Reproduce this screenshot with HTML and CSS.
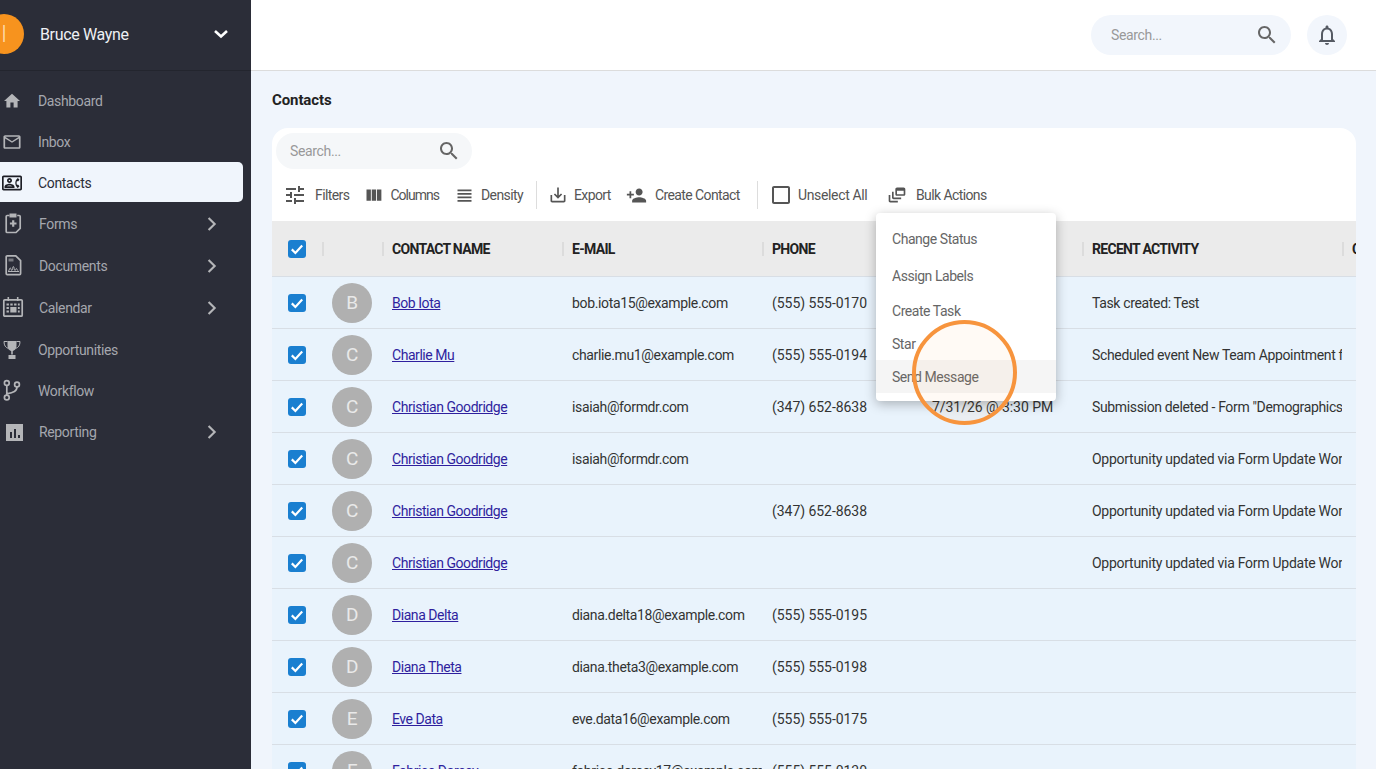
FILE: index.html
```html
<!DOCTYPE html>
<html lang="en">
<head>
    <meta charset="UTF-8">
    <meta name="viewport" content="width=device-width, initial-scale=1.0">
    <title>Contacts</title>
    <link rel="stylesheet" href="styles.css">
</head>
<body>
    <svg class="sprites" width="0" height="0">
        <symbol id="i-search" viewBox="0 0 24 24"><path d="M15.5 14h-.79l-.28-.27C15.41 12.59 16 11.11 16 9.5 16 5.91 13.09 3 9.5 3S3 5.91 3 9.5 5.91 16 9.5 16c1.61 0 3.09-.59 4.23-1.57l.27.28v.79l5 4.99L20.49 19l-4.99-5zm-6 0C7.01 14 5 11.99 5 9.5S7.01 5 9.5 5 14 7.01 14 9.5 11.99 14 9.5 14z"/></symbol>
        <symbol id="i-chevron" viewBox="0 0 24 24"><path d="M8.2 5.600 10 3.800 18.200 12 10 20.200l-1.800-1.800L14.600 12z"/></symbol>
        <symbol id="i-check" viewBox="0 0 18 18"><path d="M3.8 9.4 7.4 13l6.8-7.4" fill="none" stroke="#fff" stroke-width="2.2"/></symbol>
    </svg>

    <div class="app">
        <!-- Sidebar -->
        <aside class="sidebar">
            <div class="profile">
                <div class="profile-avatar">I</div>
                <span class="profile-name">Bruce Wayne</span>
                <svg class="profile-caret" viewBox="0 0 16 10"><path d="M2 2l6 5.5L14 2" fill="none" stroke="#fff" stroke-width="2.6"/></svg>
            </div>
            <nav class="nav">
                <a class="nav-item">
                    <svg class="nav-icon" viewBox="-3 -3 30 30"><path d="M10 20v-6h4v6h5v-8h3L12 3 2 12h3v8z"/></svg>
                    <span>Dashboard</span>
                </a>
                <a class="nav-item">
                    <svg class="nav-icon" viewBox="-2 -2 28 28"><path d="M20 4H4c-1.1 0-1.99.9-1.99 2L2 18c0 1.1.9 2 2 2h16c1.1 0 2-.9 2-2V6c0-1.1-.9-2-2-2zm0 14H4V8l8 5 8-5v10zm-8-7L4 6h16l-8 5z"/></svg>
                    <span>Inbox</span>
                </a>
                <a class="nav-item active">
                    <svg class="nav-icon" viewBox="-2.4 -2.4 28.8 28.8"><path d="M22 3H2C.9 3 0 3.9 0 5v14c0 1.1.9 2 2 2h20c1.1 0 1.99-.9 1.99-2L24 5c0-1.1-.9-2-2-2zm0 16H2V5h20v14zm-2.99-1l1.99-2-1.51-2h-1.64c-.22-.63-.35-1.3-.35-2s.13-1.37.35-2h1.64L21 8l-1.99-2c-1.31.98-2.28 2.37-2.73 4-.18.64-.28 1.31-.28 2s.1 1.36.28 2c.45 1.62 1.42 3.02 2.73 4zM9 12c1.65 0 3-1.35 3-3s-1.35-3-3-3-3 1.35-3 3 1.35 3 3 3zm0-4c.55 0 1 .45 1 1s-.45 1-1 1-1-.45-1-1 .45-1 1-1zm6 8.59c0-2.5-3.97-3.58-6-3.58s-6 1.08-6 3.58V18h12v-1.41zM5.48 16c.74-.5 2.22-1 3.52-1s2.77.49 3.52 1H5.48z"/></svg>
                    <span>Contacts</span>
                </a>
                <a class="nav-item expand">
                    <svg class="nav-icon" viewBox="0 0 24 24"><path class="line" d="M8.5 3.5H6.2a1 1 0 0 0-1 1v15a1 1 0 0 0 1 1H15l4.2-4.2V4.5a1 1 0 0 0-1-1h-2"/><path d="M8.5 1.5h7v4h-7z"/><path class="line thick" d="M12.2 8.2v6.6M8.9 11.5h6.6"/></svg>
                    <span>Forms</span>
                    <svg class="nav-chevron"><use href="#i-chevron"/></svg>
                </a>
                <a class="nav-item expand">
                    <svg class="nav-icon" viewBox="0 0 24 24"><path class="line" d="M6.2 1.8h8.6l4.8 4.8v13a1 1 0 0 1-1 1H6.2a1 1 0 0 1-1-1v-16.800a1 1 0 0 1 1-1z"/><path class="faint" d="M7.500 4.500h5v3h-5z"/><path class="line hair" d="M7 17.500h11M7.500 17c1-1 1-3 1.800-3s.7 2.500 1.500 2.500.8-4 1.600-4 .7 4 1.500 4 .8-2 1.500-2 .7 2 2 2.500"/></svg>
                    <span>Documents</span>
                    <svg class="nav-chevron"><use href="#i-chevron"/></svg>
                </a>
                <a class="nav-item expand">
                    <svg class="nav-icon" viewBox="0 0 24 24"><path class="line" d="M3.800 3.800h16.400a1 1 0 0 1 1 1v14.400a1 1 0 0 1-1 1H3.800a1 1 0 0 1-1-1V4.800a1 1 0 0 1 1-1z"/><path d="M6.500 1h1.600v4H6.500zM15.900 1h1.600v4h-1.600zM5.500 7.500h2.400v2H5.500zM9.300 7.500h2.400v2H9.300zM13.100 7.500h2.400v2h-2.400zM16.900 7.500h1.800v2h-1.800zM5.500 11h2.400v2H5.500zM5.500 14.500h2.400v2H5.500zM9.300 11h6.200v5.500H9.300zM16.900 11h1.800v2h-1.800zM16.900 14.500h1.800v2h-1.800z"/></svg>
                    <span>Calendar</span>
                    <svg class="nav-chevron"><use href="#i-chevron"/></svg>
                </a>
                <a class="nav-item">
                    <svg class="nav-icon" viewBox="0 0 24 24"><path d="M7.500 3h9v4.500c0 3-1.800 5.500-4.500 5.500s-4.500-2.500-4.500-5.500zM11.200 13h1.600v3.500h-1.600zM8.500 17h7v4h-7z"/><path class="line hair" d="M7.500 3.500H4c0 4 1.500 6 4.500 7M16.500 3.500H20c0 4-1.500 6-4.500 7"/></svg>
                    <span>Opportunities</span>
                </a>
                <a class="nav-item">
                    <svg class="nav-icon" viewBox="0 0 24 24"><circle class="line" cx="6.800" cy="4" r="2.400"/><circle class="line" cx="6.800" cy="18.500" r="2.400"/><circle class="line" cx="17" cy="5.500" r="2.400"/><path class="line" d="M6.800 6.500v9.800M17 8c0 4.200-3.500 5.500-10.200 6.800"/></svg>
                    <span>Workflow</span>
                </a>
                <a class="nav-item expand">
                    <svg class="nav-icon" viewBox="0 0 24 24"><path fill-rule="evenodd" d="M5 4h17v17H5zM9 12v6h2v-6zM13 9v9h2V9zM17 15v3h2v-3z"/></svg>
                    <span>Reporting</span>
                    <svg class="nav-chevron"><use href="#i-chevron"/></svg>
                </a>
            </nav>
        </aside>

        <div class="main">
            <!-- Top bar -->
            <header class="topbar">
                <div class="search search-top">
                    <span>Search...</span>
                    <svg class="search-icon"><use href="#i-search"/></svg>
                </div>
                <div class="bell">
                    <svg viewBox="0 0 24 24"><path d="M12 22c1.100 0 2-.9 2-2h-4c0 1.100.9 2 2 2zm6-6v-5c0-3.070-1.630-5.640-4.500-6.320V4c0-.83-.67-1.500-1.500-1.500s-1.500.67-1.500 1.500v.68C7.640 5.360 6 7.920 6 11v5l-2 2v1h16v-1l-2-2zm-2 1H8v-6c0-2.480 1.510-4.500 4-4.500s4 2.020 4 4.500v6z"/></svg>
                </div>
            </header>

            <section class="content">
                <h1>Contacts</h1>

                <div class="card">
                    <div class="search search-table">
                        <span>Search...</span>
                        <svg class="search-icon"><use href="#i-search"/></svg>
                    </div>

                    <!-- Toolbar -->
                    <div class="toolbar">
                        <button class="tool tool-filters">
                            <svg class="icon-24" viewBox="0 0 24 24"><path d="M3 17v2h6v-2H3zM3 5v2h10V5H3zm10 16v-2h8v-2h-8v-2h-2v6h2zM7 9v2H3v2h4v2h2V9H7zm14 4v-2H11v2h10zm-6-4h2V7h4V5h-4V3h-2v6z"/></svg>
                            Filters
                        </button>
                        <button class="tool tool-columns">
                            <svg class="icon-21" viewBox="0 0 24 24"><path d="M10 18h5V5h-5v13zm-6 0h5V5H4v13zM16 5v13h5V5h-5z"/></svg>
                            Columns
                        </button>
                        <button class="tool tool-density">
                            <svg class="icon-21" viewBox="0 0 24 24"><path d="M4 15h16v-2H4v2zm0 4h16v-2H4v2zm0-8h16V9H4v2zm0-6v2h16V5H4z"/></svg>
                            Density
                        </button>
                        <i class="tool-sep"></i>
                        <button class="tool tool-export">
                            <svg class="icon-20" viewBox="0 0 24 24"><path d="M19 12v7H5v-7H3v7c0 1.100.9 2 2 2h14c1.100 0 2-.9 2-2v-7h-2zm-6 .67l2.590-2.580L17 11.500l-5 5-5-5 1.410-1.410L11 12.670V3h2z"/></svg>
                            Export
                        </button>
                        <button class="tool tool-create">
                            <svg class="icon-21" viewBox="0 0 24 24"><path d="M15 12c2.210 0 4-1.790 4-4s-1.790-4-4-4-4 1.790-4 4 1.790 4 4 4zm-9-2V7H4v3H1v2h3v3h2v-3h3v-2H6zm9 4c-2.670 0-8 1.340-8 4v2h16v-2c0-2.660-5.330-4-8-4z"/></svg>
                            Create Contact
                        </button>
                        <i class="tool-sep"></i>
                        <button class="tool tool-unselect">
                            <svg class="icon-24" viewBox="0 0 24 24"><path d="M19 5v14H5V5h14m0-2H5c-1.100 0-2 .9-2 2v14c0 1.100.9 2 2 2h14c1.100 0 2-.9 2-2V5c0-1.100-.9-2-2-2z"/></svg>
                            Unselect All
                        </button>
                        <button class="tool tool-bulk">
                            <svg class="icon-20" viewBox="0 0 24 24"><path d="M8 8H6v7c0 1.100.9 2 2 2h9v-2H8V8z"/><path d="M20 3h-8c-1.100 0-2 .9-2 2v6c0 1.100.9 2 2 2h8c1.100 0 2-.9 2-2V5c0-1.100-.9-2-2-2zm0 8h-8V7h8v4z"/><path d="M4 12H2v7c0 1.100.9 2 2 2h9v-2H4v-7z"/></svg>
                            Bulk Actions
                        </button>
                    </div>

                    <!-- Bulk actions menu -->
                    <ul class="menu">
                        <li>Change Status</li>
                        <li>Assign Labels</li>
                        <li>Create Task</li>
                        <li>Star</li>
                        <li class="hover">Send Message</li>
                    </ul>

                    <!-- Contacts table -->
                    <div class="table">
                        <div class="row head">
                            <div class="cell cell-check"><span class="checkbox"><svg><use href="#i-check"/></svg></span></div>
                            <div class="cell"></div>
                            <div class="cell">CONTACT NAME</div>
                            <div class="cell">E-MAIL</div>
                            <div class="cell">PHONE</div>
                            <div class="cell"></div>
                            <div class="cell">RECENT ACTIVITY</div>
                            <div class="cell">CREATED</div>
                        </div>

                        <div class="row">
                            <div class="cell cell-check"><span class="checkbox"><svg><use href="#i-check"/></svg></span></div>
                            <div class="cell"><span class="avatar">B</span></div>
                            <div class="cell"><a>Bob Iota</a></div>
                            <div class="cell">bob.iota15@example.com</div>
                            <div class="cell cell-num">(555) 555-0170</div>
                            <div class="cell"></div>
                            <div class="cell">Task created: Test</div>
                            <div class="cell"></div>
                        </div>
                        <div class="row">
                            <div class="cell cell-check"><span class="checkbox"><svg><use href="#i-check"/></svg></span></div>
                            <div class="cell"><span class="avatar">C</span></div>
                            <div class="cell"><a>Charlie Mu</a></div>
                            <div class="cell">charlie.mu1@example.com</div>
                            <div class="cell cell-num">(555) 555-0194</div>
                            <div class="cell"></div>
                            <div class="cell">Scheduled event New Team Appointment for</div>
                            <div class="cell"></div>
                        </div>
                        <div class="row">
                            <div class="cell cell-check"><span class="checkbox"><svg><use href="#i-check"/></svg></span></div>
                            <div class="cell"><span class="avatar">C</span></div>
                            <div class="cell"><a>Christian Goodridge</a></div>
                            <div class="cell">isaiah@formdr.com</div>
                            <div class="cell cell-num">(347) 652-8638</div>
                            <div class="cell cell-num">7/31/26 @ 3:30 PM</div>
                            <div class="cell">Submission deleted - Form "Demographics"</div>
                            <div class="cell"></div>
                        </div>
                        <div class="row">
                            <div class="cell cell-check"><span class="checkbox"><svg><use href="#i-check"/></svg></span></div>
                            <div class="cell"><span class="avatar">C</span></div>
                            <div class="cell"><a>Christian Goodridge</a></div>
                            <div class="cell">isaiah@formdr.com</div>
                            <div class="cell"></div>
                            <div class="cell"></div>
                            <div class="cell cell-long">Opportunity updated via Form Update Workflow</div>
                            <div class="cell"></div>
                        </div>
                        <div class="row">
                            <div class="cell cell-check"><span class="checkbox"><svg><use href="#i-check"/></svg></span></div>
                            <div class="cell"><span class="avatar">C</span></div>
                            <div class="cell"><a>Christian Goodridge</a></div>
                            <div class="cell"></div>
                            <div class="cell cell-num">(347) 652-8638</div>
                            <div class="cell"></div>
                            <div class="cell cell-long">Opportunity updated via Form Update Workflow</div>
                            <div class="cell"></div>
                        </div>
                        <div class="row">
                            <div class="cell cell-check"><span class="checkbox"><svg><use href="#i-check"/></svg></span></div>
                            <div class="cell"><span class="avatar">C</span></div>
                            <div class="cell"><a>Christian Goodridge</a></div>
                            <div class="cell"></div>
                            <div class="cell"></div>
                            <div class="cell"></div>
                            <div class="cell cell-long">Opportunity updated via Form Update Workflow</div>
                            <div class="cell"></div>
                        </div>
                        <div class="row">
                            <div class="cell cell-check"><span class="checkbox"><svg><use href="#i-check"/></svg></span></div>
                            <div class="cell"><span class="avatar">D</span></div>
                            <div class="cell"><a>Diana Delta</a></div>
                            <div class="cell">diana.delta18@example.com</div>
                            <div class="cell cell-num">(555) 555-0195</div>
                            <div class="cell"></div>
                            <div class="cell"></div>
                            <div class="cell"></div>
                        </div>
                        <div class="row">
                            <div class="cell cell-check"><span class="checkbox"><svg><use href="#i-check"/></svg></span></div>
                            <div class="cell"><span class="avatar">D</span></div>
                            <div class="cell"><a>Diana Theta</a></div>
                            <div class="cell">diana.theta3@example.com</div>
                            <div class="cell cell-num">(555) 555-0198</div>
                            <div class="cell"></div>
                            <div class="cell"></div>
                            <div class="cell"></div>
                        </div>
                        <div class="row">
                            <div class="cell cell-check"><span class="checkbox"><svg><use href="#i-check"/></svg></span></div>
                            <div class="cell"><span class="avatar">E</span></div>
                            <div class="cell"><a>Eve Data</a></div>
                            <div class="cell">eve.data16@example.com</div>
                            <div class="cell cell-num">(555) 555-0175</div>
                            <div class="cell"></div>
                            <div class="cell"></div>
                            <div class="cell"></div>
                        </div>
                        <div class="row">
                            <div class="cell cell-check"><span class="checkbox"><svg><use href="#i-check"/></svg></span></div>
                            <div class="cell"><span class="avatar">F</span></div>
                            <div class="cell"><a>Fabrice Dorsey</a></div>
                            <div class="cell">fabrice.dorsey17@example.com</div>
                            <div class="cell cell-num">(555) 555-0130</div>
                            <div class="cell"></div>
                            <div class="cell"></div>
                            <div class="cell"></div>
                        </div>
                    </div>
                </div>
            </section>
        </div>

        <!-- Tutorial highlight -->
        <div class="highlight"></div>
    </div>
</body>
</html>
```

FILE: styles.css
```css
* {
    margin: 0;
    padding: 0;
    box-sizing: border-box;
}

html, body {
    height: 100%;
    overflow: hidden;
    font-family: Roboto, Arial, sans-serif;
    font-size: 14px;
    letter-spacing: -0.35px;
    background-color: #f0f5fc;
    color: #333;
}

.sprites {
    position: absolute;
}

.app {
    position: relative;
    display: flex;
    height: 100vh;
    overflow: hidden;
}

/* Sidebar */
.sidebar {
    flex: 0 0 267px;
    margin-left: -16px;
    background-color: #2b2d38;
}

.profile {
    display: flex;
    align-items: center;
    height: 71px;
    padding: 0 22px 2px 0;
    border-bottom: 1px solid #23252e;
}

.profile-avatar {
    display: flex;
    align-items: center;
    justify-content: center;
    flex: 0 0 40px;
    height: 40px;
    border-radius: 50%;
    background-color: #f7931e;
    color: #ffdcb0;
    font-size: 23px;
    font-weight: 300;
}

.profile-name {
    flex: 1;
    margin-left: 16px;
    color: #eef0f4;
    font-size: 16px;
}

.profile-caret {
    width: 16px;
    height: 10px;
}

.nav {
    padding-top: 9px;
}

.nav-item {
    display: flex;
    align-items: center;
    height: 41px;
    padding-left: 16px;
    margin-right: 8px;
    border-radius: 0 5px 5px 0;
    color: #a5a7ae;
}

.nav-item.expand {
    height: 42px;
    padding-left: 17px;
}

.nav-item span {
    flex: 1;
    margin-left: 14px;
}

.nav-item.active {
    height: 40px;
    margin-bottom: 1px;
    padding-top: 1px;
    background-color: #f0f5fc;
    color: #2b2d38;
}

.nav-icon {
    flex: 0 0 24px;
    width: 24px;
    height: 24px;
    fill: #b4b5b8;
}

.active .nav-icon {
    fill: #1c1d24;
}

.nav-icon .line {
    fill: none;
    stroke: #b4b5b8;
    stroke-width: 1.7;
}

.nav-icon .thick {
    stroke-width: 2.2;
}

.nav-icon .hair {
    stroke-width: 1;
}

.nav-icon .faint {
    fill: #77787f;
}

.nav-chevron {
    width: 20px;
    height: 20px;
    margin-right: 22px;
    fill: #b4b5b8;
}

/* Top bar */
.main {
    flex: 1;
    min-width: 0;
}

.topbar {
    display: flex;
    align-items: center;
    justify-content: flex-end;
    gap: 16px;
    height: 71px;
    padding-right: 29px;
    background-color: #fff;
    border-bottom: 1px solid #dcdcdc;
}

.search {
    display: flex;
    align-items: center;
    justify-content: space-between;
    color: #999;
}

.search-icon {
    width: 24px;
    height: 24px;
    fill: #666;
}

.search-top {
    width: 200px;
    height: 40px;
    padding: 0 12px 0 20px;
    border-radius: 20px;
    background-color: #f2f6fc;
}

.search-table {
    width: 196px;
    height: 36px;
    margin: 5px 0 0 4px;
    padding: 0 11px 0 14px;
    border-radius: 18px;
    background-color: #f5f7f9;
}

.bell {
    display: flex;
    align-items: center;
    justify-content: center;
    width: 40px;
    height: 40px;
    border-radius: 50%;
    background-color: #f2f6fc;
}

.bell svg {
    width: 24px;
    height: 24px;
    fill: #555a63;
}

/* Content */
.content {
    padding: 19px 20px 0 21px;
}

h1 {
    height: 20px;
    margin-bottom: 18px;
    font-size: 15px;
    line-height: 20px;
    font-weight: bold;
    letter-spacing: -0.1px;
    color: #222;
}

.card {
    position: relative;
    height: 700px;
    border-radius: 16px 16px 0 0;
    background-color: #fff;
    overflow: hidden;
}

/* Toolbar */
.toolbar {
    display: flex;
    align-items: center;
    height: 28px;
    margin: 12px 0;
    padding-left: 11px;
}

.tool {
    display: flex;
    align-items: center;
    border: none;
    background: none;
    font: inherit;
    letter-spacing: -0.6px;
    color: #555;
    white-space: nowrap;
}

.tool svg {
    flex: none;
    fill: #555;
}

.icon-24 {
    width: 24px;
    height: 24px;
}

.icon-21 {
    width: 21px;
    height: 21px;
}

.icon-20 {
    width: 20px;
    height: 20px;
}

.tool-filters { width: 79.5px; gap: 8px; }
.tool-columns { width: 91px; gap: 7px; letter-spacing: -1px; }
.tool-density { width: 82.5px; gap: 6.5px; }
.tool-export { width: 78.5px; gap: 6.5px; margin-left: 10.5px; }
.tool-create { width: 131px; gap: 8px; }
.tool-unselect { width: 118px; gap: 5px; margin-left: 11px; letter-spacing: -0.35px; }
.tool-bulk { gap: 9px; }

.tool-sep {
    flex: none;
    width: 1px;
    height: 28px;
    background-color: #ddd;
}

/* Bulk actions menu */
.menu {
    position: absolute;
    left: 604px;
    top: 85px;
    z-index: 2;
    width: 180px;
    padding: 9px 0 8px;
    list-style: none;
    border-radius: 4px;
    background-color: #fff;
    box-shadow: 0 3px 12px rgba(0, 0, 0, 0.28);
    color: #666;
    letter-spacing: -0.45px;
}

.menu li {
    display: flex;
    align-items: center;
    height: 33px;
    padding-left: 16px;
}

.menu li:nth-child(2) {
    margin: 4px 0 2px;
}

.menu li.hover {
    background-color: #f5f5f5;
}

/* Table */
.row {
    display: grid;
    grid-template-columns: 50px 60px 180px 200px 160px 160px 260px 200px;
    height: 52px;
    background-color: #e9f3fc;
    border-bottom: 1px solid #d8dee5;
}

.row.head {
    height: 56px;
    background-color: #ebebeb;
    font-weight: bold;
    letter-spacing: -0.7px;
    color: #222;
}

.cell {
    display: flex;
    align-items: center;
    padding-left: 10px;
    white-space: nowrap;
    overflow: hidden;
}

.cell-check {
    padding-left: 16px;
}

.cell-num {
    letter-spacing: -0.05px;
}

.cell-long {
    letter-spacing: -0.27px;
}

.head .cell {
    position: relative;
}

.head .cell:not(.cell-check)::before {
    content: "";
    position: absolute;
    left: 0;
    top: 21px;
    width: 2px;
    height: 14px;
    background-color: #dcdcdc;
}

.checkbox {
    display: flex;
    width: 18px;
    height: 18px;
    border-radius: 3px;
    background-color: #1a7fd0;
}

.checkbox svg {
    width: 18px;
    height: 18px;
}

.avatar {
    display: flex;
    align-items: center;
    justify-content: center;
    width: 40px;
    height: 40px;
    border-radius: 50%;
    background-color: #b0b0b0;
    color: #e9e9e9;
    font-size: 19px;
}

.cell a {
    color: #2f1f9e;
    letter-spacing: -0.45px;
    text-decoration: underline;
}

/* Tutorial highlight */
.highlight {
    position: absolute;
    left: 912px;
    top: 320px;
    z-index: 3;
    width: 105px;
    height: 105px;
    border: 4px solid #f7943d;
    border-radius: 50%;
    background-color: rgba(247, 148, 61, 0.05);
    pointer-events: none;
}
```
